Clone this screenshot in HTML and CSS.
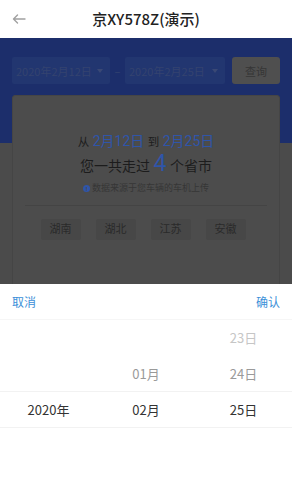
FILE: index.html
```html
<!DOCTYPE html>
<html lang="zh">
<head>
<meta charset="utf-8">
<link rel="stylesheet" href="styles.css">
</head>
<body>
<div class="screen">
  <header class="navbar">
    <span class="back">
      <svg width="14" height="10" viewBox="0 0 14 10"><path d="M13 5H1.5M5.5 1L1.5 5l4 4" fill="none" stroke="#a0a0a0" stroke-width="1.4" stroke-linecap="round" stroke-linejoin="round"/></svg>
    </span>
    <h1 class="title">京XY578Z(演示)</h1>
    <span></span>
  </header>

  <main class="content">
    <div class="filter">
      <div class="date-box"><span>2020年2月12日</span><i class="caret"></i></div>
      <span class="dash">–</span>
      <div class="date-box"><span>2020年2月25日</span><i class="caret"></i></div>
      <button class="query">查询</button>
    </div>

    <section class="card">
      <p class="range"><span class="small">从</span> <span class="hl">2月12日</span> <span class="small">到</span> <span class="hl">2月25日</span></p>
      <p class="total">您一共走过 <span class="num">4</span> 个省市</p>
      <p class="note"><i class="info">!</i>数据来源于您车辆的车机上传</p>
      <div class="divider"></div>
      <ul class="chips">
        <li>湖南</li><li>湖北</li><li>江苏</li><li>安徽</li>
      </ul>
    </section>
  </main>

  <div class="picker">
    <div class="picker-head">
      <span class="btn">取消</span>
      <span class="btn">确认</span>
    </div>
    <div class="picker-body">
      <div class="col">
        <div class="row"></div>
        <div class="row"></div>
        <div class="row sel">2020年</div>
        <div class="row"></div>
        <div class="row"></div>
      </div>
      <div class="col">
        <div class="row"></div>
        <div class="row near">01月</div>
        <div class="row sel">02月</div>
        <div class="row"></div>
        <div class="row"></div>
      </div>
      <div class="col">
        <div class="row far">23日</div>
        <div class="row near">24日</div>
        <div class="row sel">25日</div>
        <div class="row"></div>
        <div class="row"></div>
      </div>
      <div class="sel-band"></div>
    </div>
  </div>
</div>
</body>
</html>
```

FILE: styles.css
```css
* { box-sizing: border-box; }
html, body { margin: 0; padding: 0; }
body {
  width: 292px;
  height: 500px;
  overflow: hidden;
  font-family: "Noto Sans CJK SC", "Noto Sans", Roboto, sans-serif;
  background: #4b4b4b;
}
.screen { position: relative; width: 292px; height: 500px; overflow: hidden; }

.navbar {
  height: 38px;
  background: #fff;
  display: grid;
  grid-template-columns: 40px 1fr 40px;
  align-items: center;
}
.back { padding-left: 12px; display: flex; align-items: center; }
.title {
  margin: 0;
  text-align: center;
  font-size: 15px;
  font-weight: 500;
  color: #222;
  line-height: 38px;
}

.content {
  background: linear-gradient(#1c2e6b 0, #1c2e6b 105px, #4b4b4b 105px);
  padding: 19px 12px 0;
  height: 462px;
}
.filter { display: flex; align-items: center; height: 27px; }
.date-box {
  height: 27px;
  background: #223670;
  border-radius: 2px;
  display: flex;
  align-items: center;
  padding: 0 0 0 4px;
  font-size: 11px;
  color: #34436f;
  width: 98px;
}
.date-box span { flex: 1; }
.date-box + .dash + .date-box { width: 100px; }
.caret {
  width: 0; height: 0;
  border-left: 3.5px solid transparent;
  border-right: 3.5px solid transparent;
  border-top: 4px solid #3a4875;
  margin-right: 7px;
}
.dash { width: 15px; text-align: center; color: #34436f; font-size: 11px; }
.query {
  margin-left: 7px;
  width: 48px;
  height: 27px;
  border: 0;
  border-radius: 3px;
  background: #4f4f4f;
  color: #363636;
  font-family: inherit;
  font-size: 11px;
  padding: 0;
}

.card {
  margin-top: 11px;
  background: #4c4c4c;
  border: 1px solid #454545;
  border-radius: 3px;
  height: 240px;
  padding-top: 36px;
  text-align: center;
  font-family: Roboto, "Noto Sans CJK SC", sans-serif;
}
.card p { margin: 0; }
.range { line-height: 18px; font-size: 14px; color: #1c1c1c; }
.range .small { font-size: 11.5px; }
.range .hl { font-size: 14px; color: #2f55aa; }
.total { line-height: 26px; font-size: 14px; color: #1c1c1c; }
.total .num { font-size: 23px; line-height: 26px; color: #2f55aa; }
.note {
  margin-top: 2px !important;
  line-height: 14px;
  font-size: 9px;
  color: #363636;
  display: flex;
  justify-content: center;
  align-items: center;
  gap: 2px;
}
.info {
  width: 7px; height: 7px;
  border-radius: 50%;
  background: #2f55aa;
  color: #4c4c4c;
  font-style: normal;
  font-size: 6px;
  line-height: 7px;
  font-weight: 700;
}
.divider { margin: 10px 12px 0; height: 1px; background: #444; }
.chips {
  list-style: none;
  margin: 13px 0 0;
  padding: 0 6px 0 0;
  display: flex;
  justify-content: center;
  gap: 15px;
}
.chips li {
  width: 40px;
  height: 21px;
  line-height: 21px;
  background: #474747;
  border-radius: 2px;
  font-size: 11px;
  color: #2a2a2a;
}

.picker {
  position: absolute;
  left: 0; right: 0; bottom: 0;
  height: 216px;
  background: #fff;
}
.picker-head {
  height: 36px;
  display: flex;
  justify-content: space-between;
  align-items: center;
  padding: 0 12px;
  border-bottom: 1px solid #f6f6f6;
}
.btn { font-size: 12px; color: #3b8fd8; }
.picker-body {
  position: relative;
  display: grid;
  grid-template-columns: 97px 98px 97px;
}
.row {
  height: 36px;
  line-height: 36px;
  text-align: center;
  font-size: 13px;
  color: #333;
}
.row.near { color: #9a9a9a; }
.row.far { color: #c6c6c6; }
.sel-band {
  position: absolute;
  left: 0; right: 0;
  top: 71px;
  height: 37px;
  border-top: 1px solid #f2f2f2;
  border-bottom: 1px solid #f2f2f2;
  pointer-events: none;
}
```
